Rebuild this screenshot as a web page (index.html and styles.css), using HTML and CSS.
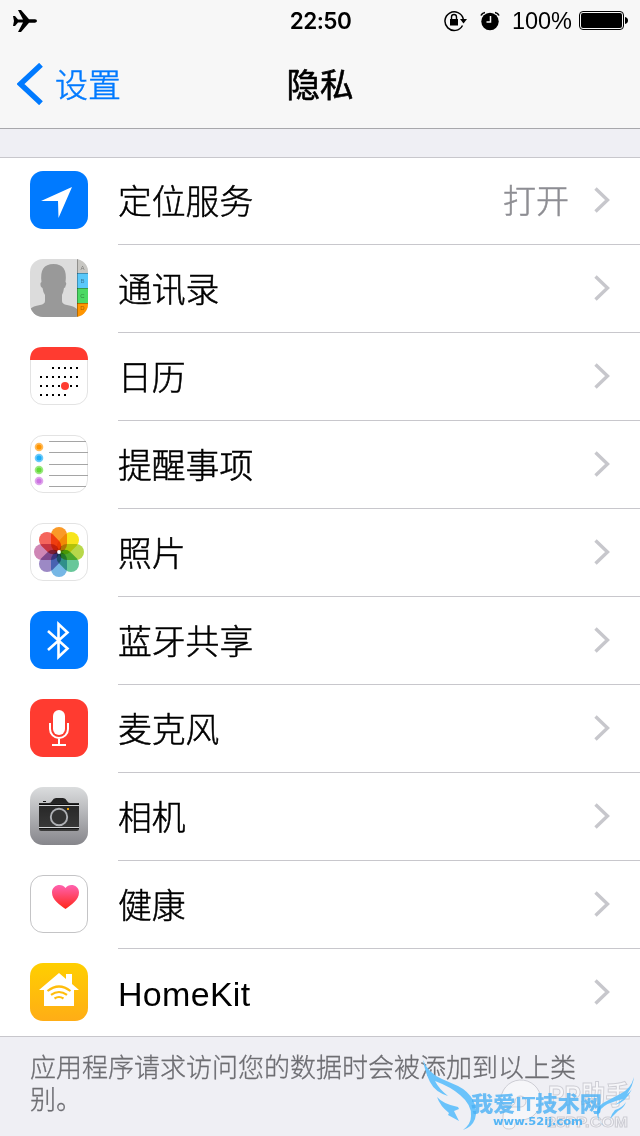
FILE: index.html
```html
<!DOCTYPE html>
<html lang="zh-CN">
<head>
    <meta charset="UTF-8">
    <meta name="viewport" content="width=device-width, initial-scale=1.0">
    <title>隐私</title>
    <link rel="stylesheet" href="styles.css">
</head>
<body>
    <div class="screen">

        <header class="header">
            <div class="status-bar">
                <div class="status-left">
                    <svg class="plane" width="24" height="22" viewBox="0 0 24 22"><path d="M0 6h2l3 3.500h5L5 0h3l8 9.300h6q2 .3 2 1.700t-2 1.700h-6L8 22H5l5-9.500H5L2 16H0l1-5z"/></svg>
                </div>
                <div class="clock">22:50</div>
                <div class="status-right">
                    <!-- rotation lock -->
                    <svg class="lock" width="24" height="22" viewBox="0 0 24 22">
                        <path d="M18.500 15.500A9.300 9.300 0 1 1 19.300 9" fill="none" stroke="#000" stroke-width="1.500"/>
                        <path d="M16 9h7l-3.500 4.500z"/>
                        <rect x="6" y="9" width="8" height="6.500"/>
                        <path d="M7.500 9V7a2.500 2.500 0 0 1 5 0v2" fill="none" stroke="#000" stroke-width="1.400"/>
                    </svg>
                    <!-- alarm -->
                    <svg class="alarm" width="20" height="20" viewBox="0 0 20 20">
                        <circle cx="10" cy="10.500" r="8.700"/>
                        <path d="M1 4.500Q2 2 5 1.500M19 4.500Q18 2 15 1.500" fill="none" stroke="#000" stroke-width="1.700"/>
                        <path d="M10.500 5v6H6.500" fill="none" stroke="#f7f7f7" stroke-width="1.500"/>
                    </svg>
                    <span class="percent">100%</span>
                    <svg class="battery" width="49" height="19" viewBox="0 0 49 19">
                        <rect x=".5" y=".5" width="44" height="18" rx="3.500" fill="none" stroke="#000"/>
                        <rect x="2" y="2" width="41" height="15" rx="2"/>
                        <path d="M46 6q3 .8 3 3.500T46 13z"/>
                    </svg>
                </div>
            </div>
            <nav class="nav-bar">
                <a class="back">
                    <svg width="26" height="42" viewBox="0 0 26 42"><path d="M24 1.800L3.500 21 24 40.200" fill="none" stroke="#007aff" stroke-width="5.400"/></svg>
                    <span>设置</span>
                </a>
                <h1 class="title">隐私</h1>
            </nav>
        </header>

        <ul class="list">
            <li class="row">
                <svg class="icon" viewBox="0 0 58 58">
                    <rect width="58" height="58" rx="13" fill="#007aff"/>
                    <path d="M42 16L11 30h17l.5 17z" fill="#fff"/>
                </svg>
                <div class="cell"><span class="label">定位服务</span><span class="value">打开</span><svg class="arrow" viewBox="0 0 16 26"><path d="M1.500 1.500L13.500 13l-12 11.500"/></svg></div>
            </li>
            <li class="row">
                <svg class="icon" viewBox="0 0 58 58">
                    <clipPath id="tile"><rect width="58" height="58" rx="13"/></clipPath>
                    <g clip-path="url(#tile)">
                        <rect width="58" height="58" fill="#dcdcdc"/>
                        <path d="M0 50q3-3 10-4 5-1 5-4v-6q-2-3-2.500-7-2.500-1-2-5l1-1Q9 5 23.500 5 38 5 35.500 23q1.500 1 0 4 0 2-1.500 2-.5 4-2 7v6q0 3 5 4 7 1 10 4v8H0z" fill="#999"/>
                        <rect x="47" width="11" height="14" fill="#c8c7c3"/>
                        <rect x="47" y="14" width="11" height="15" fill="#5ac8fa"/>
                        <rect x="47" y="29" width="11" height="15" fill="#4cd964"/>
                        <rect x="47" y="44" width="11" height="14" fill="#ff9500"/>
                        <path d="M47.500 0v58M47 14.500h11M47 29.500h11M47 44.500h11" stroke="#000" stroke-opacity=".28"/>
                        <g class="tabs"><text x="52.500" y="11">A</text><text x="52.500" y="24">B</text><text x="52.500" y="39">C</text><text x="52.500" y="51">D</text></g>
                    </g>
                </svg>
                <div class="cell"><span class="label">通讯录</span><svg class="arrow" viewBox="0 0 16 26"><path d="M1.500 1.500L13.500 13l-12 11.500"/></svg></div>
            </li>
            <li class="row">
                <svg class="icon" viewBox="0 0 58 58">
                    <rect x=".5" y=".5" width="57" height="57" rx="12.500" fill="#fff" stroke="#e3e3e3"/>
                    <path d="M0 13Q0 0 13 0h32q13 0 13 13z" fill="#ff3b30"/>
                    <path d="M22 21h27M10 30h39M10 39h39M10 48h27" stroke="#000" stroke-width="2" stroke-dasharray="2 4"/>
                    <circle cx="35" cy="39" r="4" fill="#ff3b30"/>
                </svg>
                <div class="cell"><span class="label">日历</span><svg class="arrow" viewBox="0 0 16 26"><path d="M1.500 1.500L13.500 13l-12 11.500"/></svg></div>
            </li>
            <li class="row">
                <svg class="icon" viewBox="0 0 58 58">
                    <rect x=".5" y=".5" width="57" height="57" rx="12.500" fill="#fff" stroke="#e3e3e3"/>
                    <path d="M19 6.500h37M19 17.500h39M19 29.500h39M19 40.500h39M19 51.500h37" stroke="#a5a5a5"/>
                    <g fill-opacity=".65">
                        <circle cx="9" cy="12" r="4.300" fill="#ff9500"/><circle cx="9" cy="23" r="4.300" fill="#1badf8"/>
                        <circle cx="9" cy="35" r="4.300" fill="#63da38"/><circle cx="9" cy="46" r="4.300" fill="#cc73e1"/>
                    </g>
                    <circle cx="9" cy="12" r="2.500" fill="#ff9500"/><circle cx="9" cy="23" r="2.500" fill="#1badf8"/>
                    <circle cx="9" cy="35" r="2.500" fill="#63da38"/><circle cx="9" cy="46" r="2.500" fill="#cc73e1"/>
                </svg>
                <div class="cell"><span class="label">提醒事项</span><svg class="arrow" viewBox="0 0 16 26"><path d="M1.500 1.500L13.500 13l-12 11.500"/></svg></div>
            </li>
            <li class="row">
                <svg class="icon" viewBox="0 0 58 58">
                    <rect x=".5" y=".5" width="57" height="57" rx="12.500" fill="#fff" stroke="#e3e3e3"/>
                    <g class="petals">
                        <rect x="21" y="4" width="16" height="25" rx="8" fill="#fa9a28"/>
                        <rect x="21" y="4" width="16" height="25" rx="8" fill="#f7e51c" transform="rotate(45 29 29)"/>
                        <rect x="21" y="4" width="16" height="25" rx="8" fill="#b8d84a" transform="rotate(90 29 29)"/>
                        <rect x="21" y="4" width="16" height="25" rx="8" fill="#68c79a" transform="rotate(135 29 29)"/>
                        <rect x="21" y="4" width="16" height="25" rx="8" fill="#76b7e5" transform="rotate(180 29 29)"/>
                        <rect x="21" y="4" width="16" height="25" rx="8" fill="#9c89c5" transform="rotate(225 29 29)"/>
                        <rect x="21" y="4" width="16" height="25" rx="8" fill="#cf86b5" transform="rotate(270 29 29)"/>
                        <rect x="21" y="4" width="16" height="25" rx="8" fill="#f5655c" transform="rotate(315 29 29)"/>
                    </g>
                    <circle cx="29" cy="29" r="1.900" fill="#fff"/>
                </svg>
                <div class="cell"><span class="label">照片</span><svg class="arrow" viewBox="0 0 16 26"><path d="M1.500 1.500L13.500 13l-12 11.500"/></svg></div>
            </li>
            <li class="row">
                <svg class="icon" viewBox="0 0 58 58">
                    <rect width="58" height="58" rx="13" fill="#007aff"/>
                    <path d="M18 20l19.500 17.500-9 8.500V13l9 8.500L18 39" fill="none" stroke="#fff" stroke-width="2.600"/>
                </svg>
                <div class="cell"><span class="label">蓝牙共享</span><svg class="arrow" viewBox="0 0 16 26"><path d="M1.500 1.500L13.500 13l-12 11.500"/></svg></div>
            </li>
            <li class="row">
                <svg class="icon" viewBox="0 0 58 58">
                    <rect width="58" height="58" rx="13" fill="#ff3b30"/>
                    <rect x="23" y="11" width="12" height="25" rx="6" fill="#fff"/>
                    <path d="M20 24v6a9 9 0 0 0 18 0v-6M29 39v7M22 46h14" fill="none" stroke="#fff" stroke-width="2"/>
                </svg>
                <div class="cell"><span class="label">麦克风</span><svg class="arrow" viewBox="0 0 16 26"><path d="M1.500 1.500L13.500 13l-12 11.500"/></svg></div>
            </li>
            <li class="row">
                <svg class="icon" viewBox="0 0 58 58">
                    <linearGradient id="silver" x2="0" y2="1"><stop stop-color="#dbddde"/><stop offset="1" stop-color="#86868b"/></linearGradient>
                    <linearGradient id="body" x2="0" y2="1"><stop stop-color="#222"/><stop offset="1" stop-color="#3b3b3b"/></linearGradient>
                    <rect width="58" height="58" rx="13" fill="url(#silver)"/>
                    <path d="M9 18v-2h10q2 0 3-2 1.500-3 4-3h7q2.500 0 4 3 1 2 3 2h9v26q0 2-2 2H11q-2 0-2-2z" fill="url(#body)"/>
                    <path d="M9 18.500h40M9 40.500h40" stroke="#d4d5d7"/>
                    <path d="M9 17.500h40M9 41.500h40" stroke="#111"/>
                    <path d="M13 14.500h3" stroke="#111"/>
                    <circle cx="29" cy="30" r="8.200" fill="#333" stroke="#aeb0b4" stroke-width="1.900"/>
                    <rect x="37" y="21" width="2" height="2" fill="#e5a00d"/>
                </svg>
                <div class="cell"><span class="label">相机</span><svg class="arrow" viewBox="0 0 16 26"><path d="M1.500 1.500L13.500 13l-12 11.500"/></svg></div>
            </li>
            <li class="row">
                <svg class="icon" viewBox="0 0 58 58">
                    <linearGradient id="pink" x2="0" y2="1"><stop stop-color="#ff62b0"/><stop offset="1" stop-color="#ff2618"/></linearGradient>
                    <rect x=".5" y=".5" width="57" height="57" rx="12.500" fill="#fff" stroke="#c4c4c6"/>
                    <path d="M35.500 34C30 30 22 25 22 17.500c0-8 10-10 13.500-4.500C39 7.500 49 9.500 49 17.500 49 25 41 30 35.500 34z" fill="url(#pink)"/>
                </svg>
                <div class="cell"><span class="label">健康</span><svg class="arrow" viewBox="0 0 16 26"><path d="M1.500 1.500L13.500 13l-12 11.500"/></svg></div>
            </li>
            <li class="row">
                <svg class="icon" viewBox="0 0 58 58">
                    <linearGradient id="gold" x2="0" y2="1"><stop stop-color="#ffcf00"/><stop offset="1" stop-color="#ffad16"/></linearGradient>
                    <rect width="58" height="58" rx="13" fill="url(#gold)"/>
                    <path d="M29 10l7 6v-5h6v10l7 6h-5v16H14V27H9z" fill="#fff"/>
                    <path d="M17.500 28q11.500-9 23 0M21 31.800q8-5.600 16 0M24.500 35.500q4.500-3 9 0" fill="none" stroke="#ffbd0c" stroke-width="2.200"/>
                </svg>
                <div class="cell"><span class="label latin">HomeKit</span><svg class="arrow" viewBox="0 0 16 26"><path d="M1.500 1.500L13.500 13l-12 11.500"/></svg></div>
            </li>
        </ul>

        <p class="note">应用程序请求访问您的数据时会被添加到以上类别。</p>

        <!-- site marks over the bottom right corner -->
        <svg class="watermark" viewBox="0 0 220 80">
            <g class="pp">
                <path d="M81 46a20 20 0 1 1 20 18q-6 0-6 4 0 5-6 5t-6-5v-8q0-9 10-9h8a5.500 5.500 0 1 0-6-6q0 5-6 5t-8-4z"/>
                <text x="128" y="49" class="pp-name" textLength="82" lengthAdjust="spacingAndGlyphs">PP助手</text>
                <text x="127" y="71" class="pp-url" textLength="81" lengthAdjust="spacingAndGlyphs">25PP.COM</text>
            </g>
            <g class="wings">
                <path d="M3 4Q8 17 22 23l16 7q10 5 15 14 5 10 2 19-3 8-12 11 8-6 8-14 1-11-11-21Q31 31 15 25q4 8 13 15-13-4-18-14Q5 16 3 4z"/>
                <path d="M17 41q6 7 21 10l1 2-5 2 5 10-11-6 1-2Q20 50 17 41z"/>
                <path d="M214 21q-3 12-14 17l-17 9q-13 9 1 23-9-7-3-17 5-6 22-10l-8 6q11-3 17-16-2 3-5 5 6-8 7-17z"/>
                <path d="M206 46q-2 6-8 9l-8 8q2-6 5-9 7-2 11-8z"/>
            </g>
            <text x="51" y="55" class="site-name" textLength="131" lengthAdjust="spacingAndGlyphs">我爱IT技术网</text>
            <text x="73" y="69" class="site-url" textLength="90" lengthAdjust="spacingAndGlyphs">www.52ij.com</text>
        </svg>
    </div>
</body>
</html>
```
FILE: styles.css
```css
*{
    box-sizing: border-box;
    margin: 0;
    padding: 0;
}

body{
    background-color: #efeff4;
    font-family: "Liberation Sans", "Noto Sans CJK SC", sans-serif;
    color: #000;
}

.screen{
    position: relative;
    width: 640px;
    height: 1136px;
    overflow: hidden;
}

/* status bar and navigation */
.header{
    height: 129px;
    background-color: #f7f7f7;
    border-bottom: 1px solid #a8a8ac;
}

.status-bar{
    height: 40px;
    display: grid;
    grid-template-columns: 1fr auto 1fr;
    align-items: center;
    padding: 0 12px 0 13px;
}

.plane{
    display: block;
}

.clock{
    font-family: Inter, sans-serif;
    font-size: 22.5px;
    font-weight: 600;
    letter-spacing: -.5px;
    line-height: 40px;
    padding-top: 1px;
}

.status-right{
    display: flex;
    align-items: center;
    justify-content: flex-end;
}

.alarm{
    margin-left: 12px;
}

.percent{
    font-size: 23.5px;
    line-height: 40px;
    margin: 1px 7px 0 12px;
}

.nav-bar{
    height: 88px;
    display: grid;
    grid-template-columns: 1fr auto 1fr;
    align-items: center;
    padding: 0 17px;
}

.back{
    display: flex;
    align-items: center;
    color: #007aff;
    font-size: 33px;
    font-weight: 300;
    line-height: 48px;
    -webkit-text-stroke: .5px;
}

.back span{
    margin-left: 12px;
    padding-top: 3px;
}

.title{
    font-size: 33.5px;
    font-weight: 400;
    line-height: 48px;
    padding-top: 3px;
    -webkit-text-stroke: .6px;
}

/* list */
.list{
    list-style: none;
    margin-top: 28px;
    background-color: #fff;
    border-top: 1px solid #c8c7cc;
}

.row{
    display: flex;
    align-items: flex-end;
    height: 88px;
    padding-left: 30px;
}

.row:first-child{
    height: 87px;
}

.row:last-child{
    border-bottom: 1px solid #c8c7cc;
}

.icon{
    width: 58px;
    height: 58px;
    margin-bottom: 16px;
    flex: none;
}

.row:last-child .icon{
    margin-bottom: 15px;
}

.cell{
    flex: 1;
    height: 100%;
    margin-left: 30px;
    padding-right: 30px;
    padding-bottom: 2px;
    display: flex;
    align-items: center;
    border-bottom: 1px solid #c8c7cc;
}

.row:last-child .cell{
    border-bottom: none;
}

.label{
    flex: 1;
    font-size: 33.8px;
    font-weight: 300;
    line-height: 48px;
    padding-top: 4px;
    -webkit-text-stroke: .5px;
}

.latin{
    font-size: 34px;
    letter-spacing: .3px;
    -webkit-text-stroke: 0;
}

.value{
    color: #8e8e93;
    font-size: 33px;
    font-weight: 300;
    line-height: 48px;
    margin-right: 25px;
    padding-top: 4px;
    -webkit-text-stroke: .5px;
}

.arrow{
    width: 16px;
    height: 26px;
}

.arrow path{
    fill: none;
    stroke: #c7c7cc;
    stroke-width: 3.4;
}

.tabs{
    fill: rgba(0, 0, 0, .4);
    font-size: 6px;
    text-anchor: middle;
}

.petals{
    isolation: isolate;
}

.petals rect{
    mix-blend-mode: multiply;
}

.note{
    padding: 15px 30px;
    color: #6d6d72;
    font-size: 26px;
    font-weight: 300;
    line-height: 32px;
    -webkit-text-stroke: .3px;
}

/* overlay marks */
.watermark{
    position: absolute;
    left: 420px;
    top: 1056px;
    width: 220px;
    height: 80px;
}

.pp{
    fill: rgba(255, 255, 255, .45);
    stroke: rgba(160, 160, 170, .45);
    stroke-width: 1;
}

.pp-name{
    font-size: 27px;
    font-weight: 700;
}

.pp-url{
    font-size: 15px;
    font-weight: 700;
}

.wings{
    fill: #6ac3fb;
}

.site-name{
    fill: #4ab0f5;
    fill-opacity: .8;
    font-size: 21px;
    font-weight: 900;
}

.site-url{
    fill: #55b5f5;
    font-family: "DejaVu Sans", sans-serif;
    font-size: 11px;
    font-weight: 700;
}
```
